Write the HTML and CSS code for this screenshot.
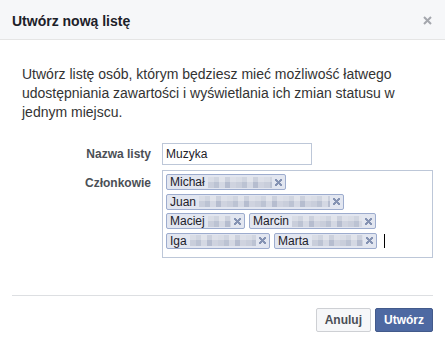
FILE: index.html
```html
<!DOCTYPE html>
<html lang="pl">
<head>
    <meta charset="UTF-8">
    <title>Utwórz nową listę</title>
    <link rel="stylesheet" href="styles.css">
</head>
<body>
    <div class="dialog">
        <div class="dialog-header">
            <h2>Utwórz nową listę</h2>
            <button class="close" aria-label="Zamknij">
                <svg width="9" height="9" viewBox="0 0 9 9"><path d="M1 1L8 8M8 1L1 8" stroke="#a4a7ad" stroke-width="2"/></svg>
            </button>
        </div>

        <div class="dialog-body">
            <p class="intro">Utwórz listę osób, którym będziesz mieć możliwość łatwego udostępniania zawartości i wyświetlania ich zmian statusu w jednym miejscu.</p>

            <div class="form-grid">
                <label class="form-label" for="list-name">Nazwa listy</label>
                <input class="text-input" type="text" id="list-name" value="Muzyka">

                <label class="form-label members-label">Członkowie</label>
                <div class="members">
                    <span class="token">Michał <span class="blur b-michal"></span><span class="remove"></span></span>
                    <span class="token">Juan <span class="blur b-juan"></span><span class="remove"></span></span>
                    <span class="token">Maciej <span class="blur b-maciej"></span><span class="remove"></span></span>
                    <span class="token">Marcin <span class="blur b-marcin"></span><span class="remove"></span></span>
                    <span class="token">Iga <span class="blur b-iga"></span><span class="remove"></span></span>
                    <span class="token">Marta <span class="blur b-marta"></span><span class="remove"></span></span>
                    <span class="caret"></span>
                </div>
            </div>
        </div>

        <div class="dialog-footer">
            <button class="btn btn-cancel">Anuluj</button>
            <button class="btn btn-primary">Utwórz</button>
        </div>
    </div>
</body>
</html>
```

FILE: styles.css
```css
body {
    margin: 0;
    padding: 0;
    background: #fff;
    font-family: "Liberation Sans", Arial, sans-serif;
    color: #333;
}

.dialog {
    width: 445px;
    height: 343px;
    background: #fff;
}

.dialog-header {
    display: flex;
    justify-content: space-between;
    align-items: center;
    height: 39px;
    padding: 0 12px;
    background: #f6f7f9;
    border-bottom: 1px solid #e5e5e5;
}

.dialog-header h2 {
    margin: 2px 0 0;
    font-size: 14px;
    font-weight: bold;
    color: #1d2129;
}

.close {
    display: flex;
    padding: 0;
    margin: 2px 1px 0 0;
    border: none;
    background: none;
}

.dialog-body {
    padding: 0 12px;
}

.intro {
    margin: 25px 10px 21px;
    font-size: 14px;
    line-height: 19px;
    color: #333;
}

.form-grid {
    display: grid;
    grid-template-columns: 139px 1fr;
    column-gap: 11px;
    row-gap: 5px;
}

.form-label {
    text-align: right;
    font-size: 12px;
    font-weight: bold;
    line-height: 16px;
    color: #4b4f56;
    align-self: center;
}

.members-label {
    align-self: start;
    padding-top: 5px;
}

.text-input {
    box-sizing: border-box;
    width: 150px;
    height: 22px;
    margin: 0;
    padding: 0 3px;
    border: 1px solid #bdc7d8;
    font-family: inherit;
    font-size: 12px;
    color: #1d2129;
    outline: none;
}

.members {
    box-sizing: border-box;
    height: 88px;
    display: flex;
    flex-wrap: wrap;
    align-content: flex-start;
    align-items: center;
    gap: 3.5px 4px;
    padding: 3px 12px 3px 3px;
    border: 1px solid #bdc7d8;
}

.token {
    display: inline-flex;
    align-items: center;
    height: 16px;
    box-sizing: border-box;
    padding: 0 3px;
    border: 1px solid #9dacce;
    border-radius: 2px;
    background: #e2e6f0;
    font-size: 12px;
    line-height: 14px;
    color: #1d2129;
    white-space: pre;
}

.blur {
    display: inline-block;
    height: 11px;
    background:
        linear-gradient(180deg, rgba(255, 255, 255, 0.3) 0 45%, transparent 45%),
        repeating-linear-gradient(90deg, #c9cedb 0 6px, #bcc3d3 6px 11px, #d4d8e3 11px 17px, #b6bdcf 17px 22px, #cfd3df 22px 28px);
}

.b-michal { width: 64px; }
.b-juan { width: 131px; }
.b-maciej { width: 23px; }
.b-marcin { width: 70px; }
.b-iga { width: 66px; }
.b-marta { width: 51px; }

.remove {
    width: 7px;
    height: 7px;
    margin-left: 3px;
    background:
        linear-gradient(45deg, transparent 40%, #8593b3 40% 60%, transparent 60%),
        linear-gradient(-45deg, transparent 40%, #8593b3 40% 60%, transparent 60%);
}

.caret {
    width: 1px;
    height: 14px;
    margin-left: 3px;
    background: #000;
}

.dialog-footer {
    display: flex;
    justify-content: flex-end;
    gap: 4px;
    margin: 37px 12px 0;
    padding-top: 12px;
    border-top: 1px solid #dddfe2;
}

.btn {
    height: 24px;
    padding: 0 8px;
    border: 1px solid;
    border-radius: 2px;
    font-family: inherit;
    font-size: 12px;
    font-weight: bold;
    line-height: 22px;
    cursor: pointer;
}

.btn-cancel {
    background: #f6f7f9;
    border-color: #ced0d4;
    color: #4b4f56;
}

.btn-primary {
    background: #4e69a2;
    border-color: #435a8b;
    color: #fff;
}
```
